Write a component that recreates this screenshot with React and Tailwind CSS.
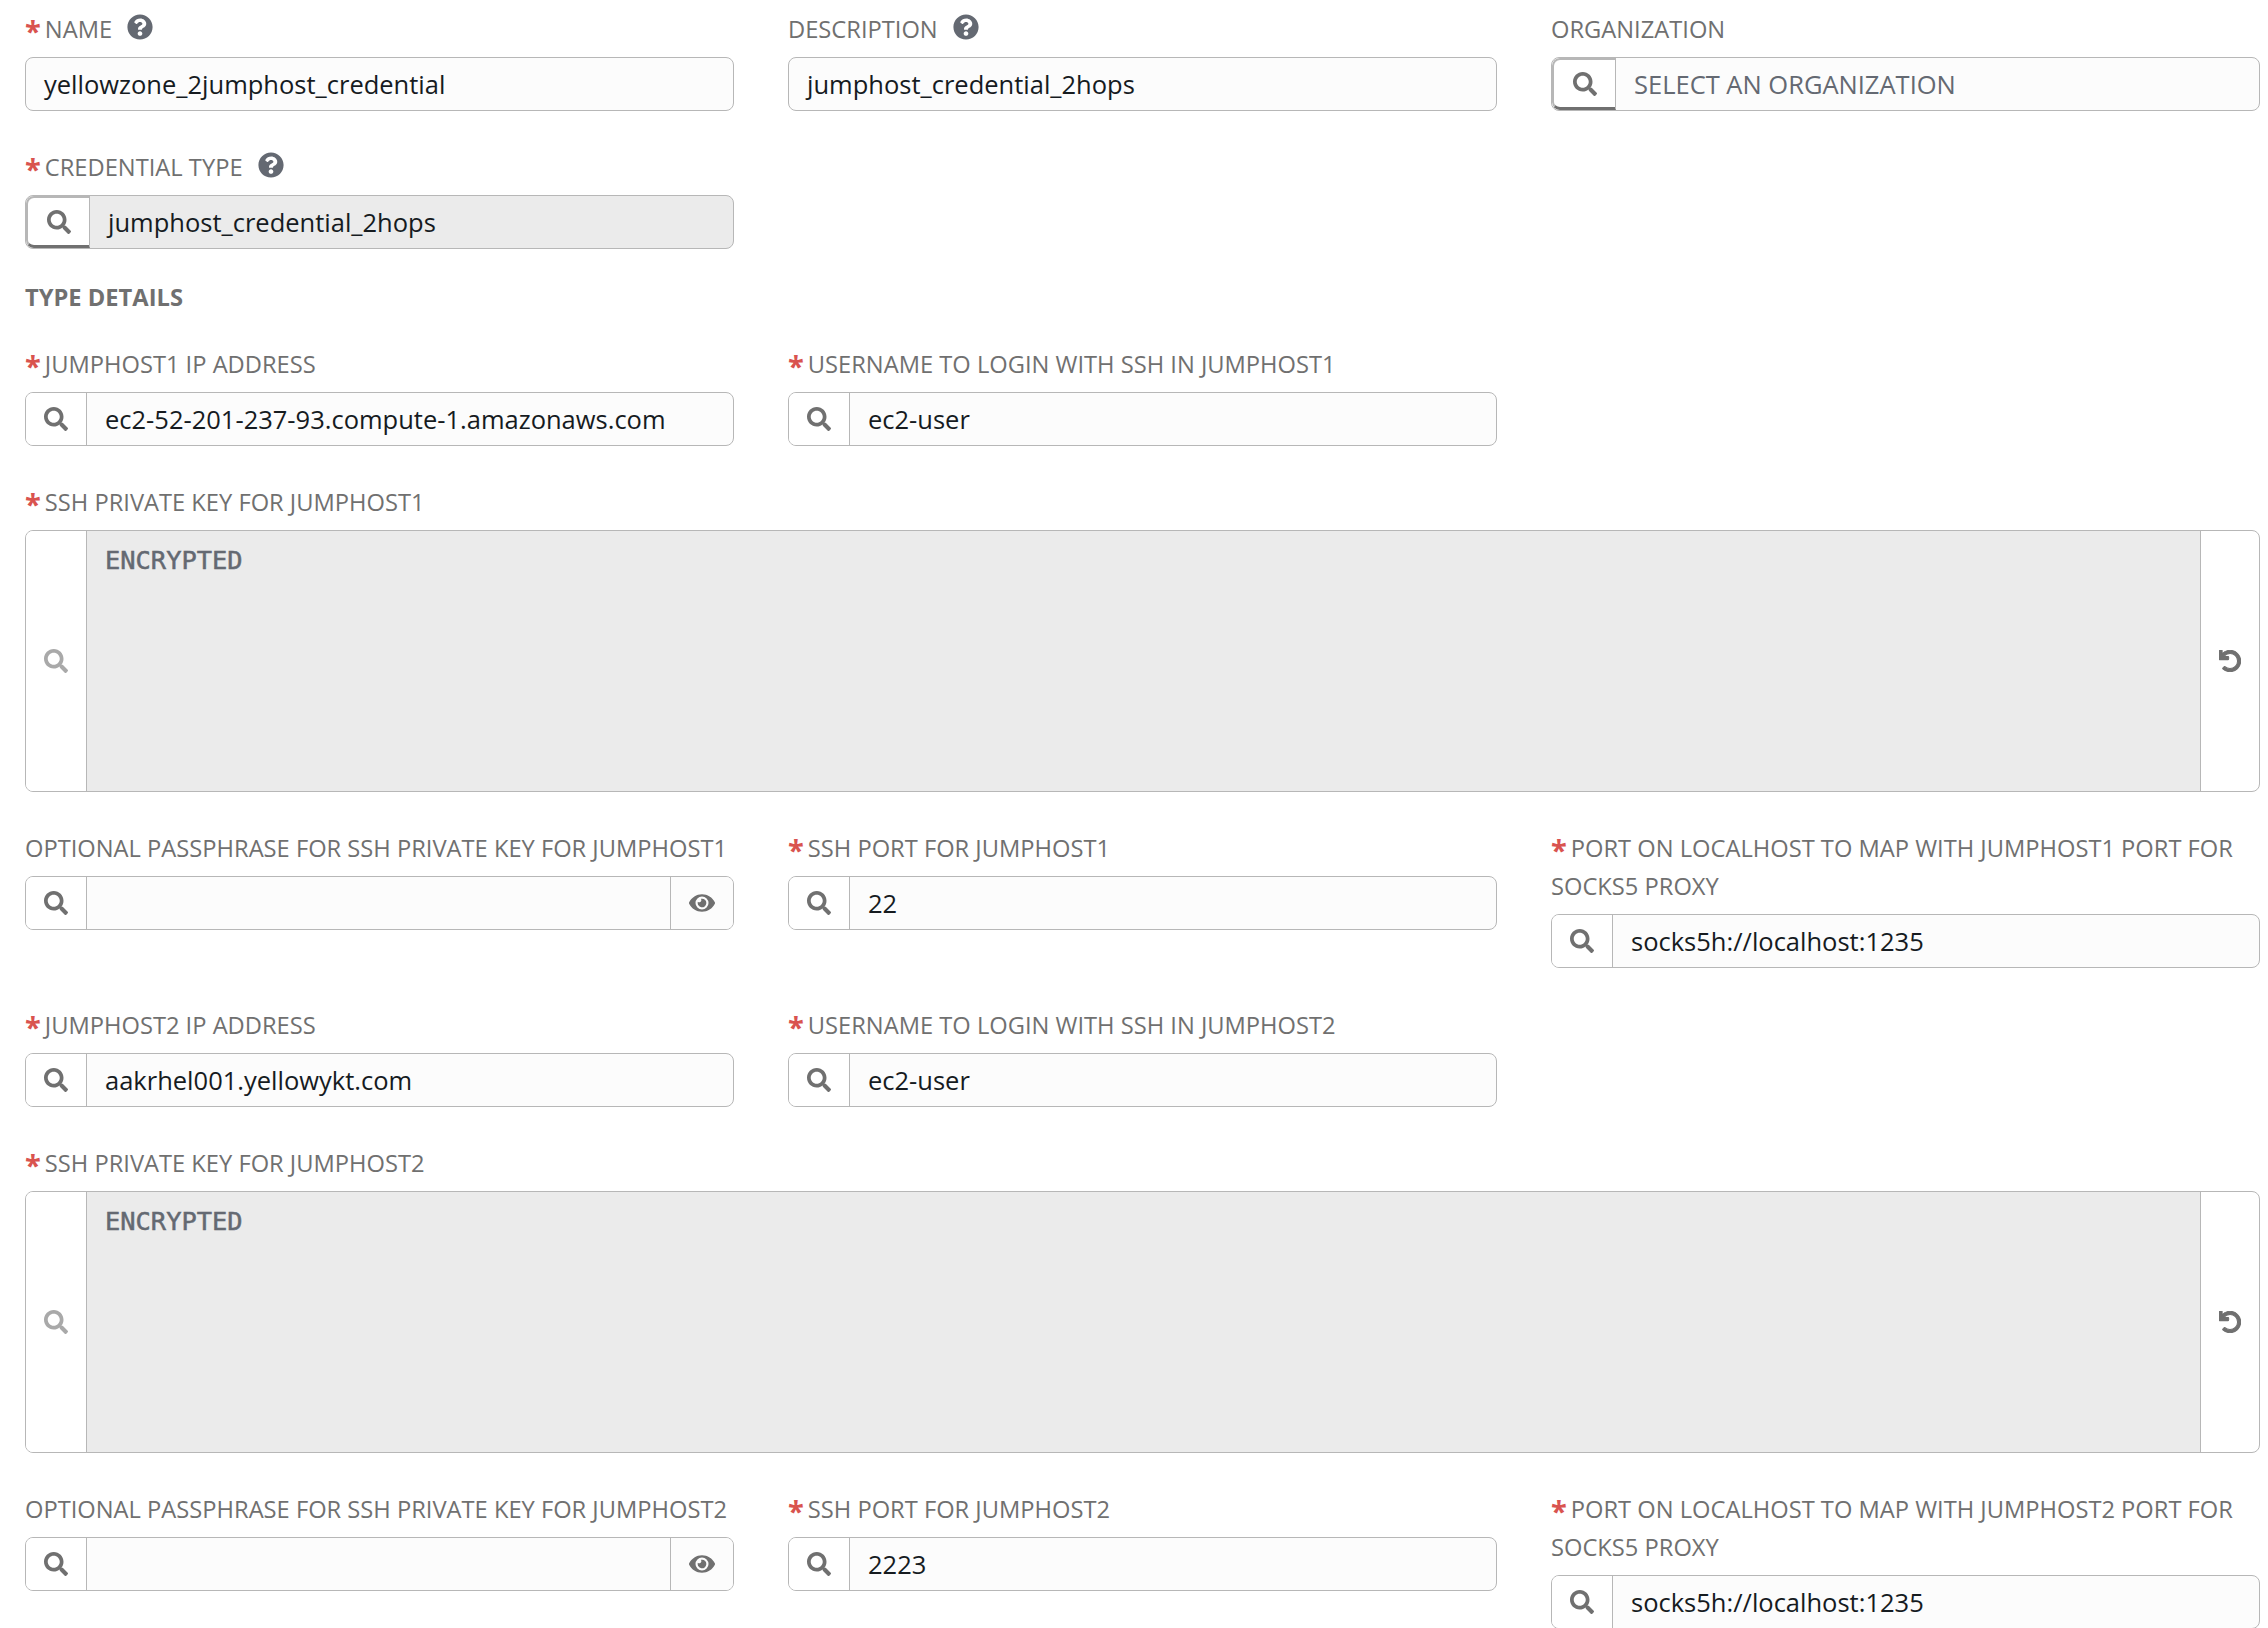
import { FaQuestionCircle, FaSearch, FaUndo, FaEye } from 'react-icons/fa';

function Label({ text, required, help, className = '' }) {
  return (
    <div className={`mb-[9px] text-[23.7px] leading-[38px] text-[#707070] ${className}`}>
      {required && <span className="mr-[4px] align-[-4px] text-[29px] font-bold leading-none text-[#d9534f]">*</span>}
      {text}
      {help && <FaQuestionCircle className="ml-[15px] inline-block align-[-2px] text-[#646972]" size={26} />}
    </div>
  );
}

function SearchAddon({ className = 'w-[61px]', muted }) {
  return (
    <div className={`flex shrink-0 items-center justify-center border-r border-[#b7b7b7] bg-white ${className}`}>
      <FaSearch size={24} className={muted ? 'text-[#a9a9a9]' : 'text-[#707070]'} />
    </div>
  );
}

function TextField({ value }) {
  return (
    <div className="flex h-[54px] items-center rounded-[8px] border border-[#b7b7b7] bg-[#fcfcfc] pl-[18px] text-[25.5px] text-[#161b1f]">
      {value}
    </div>
  );
}

function LookupField({ value }) {
  return (
    <div className="flex h-[54px] overflow-hidden rounded-[8px] border border-[#b7b7b7] bg-[#fcfcfc] text-[25.5px] text-[#161b1f]">
      <SearchAddon />
      <div className="flex flex-1 items-center pl-[18px]">{value}</div>
    </div>
  );
}

function SelectedLookup({ value, disabled }) {
  return (
    <div className={`flex h-[54px] overflow-hidden rounded-[8px] border border-[#b7b7b7] text-[25.5px] ${disabled ? 'bg-[#ebebeb] text-[#161b1f]' : 'bg-[#fcfcfc] text-[#646972]'}`}>
      <div className="flex w-[64px] shrink-0 items-center justify-center rounded-l-[8px] border-l-2 border-r border-t-2 border-b-[3px] border-[#b7b7b7] border-b-[#707070] bg-white">
        <FaSearch size={24} className="text-[#707070]" />
      </div>
      <div className="flex flex-1 items-center pl-[18px]">{value}</div>
    </div>
  );
}

function PasswordField() {
  return (
    <div className="flex h-[54px] overflow-hidden rounded-[8px] border border-[#b7b7b7] bg-[#fcfcfc]">
      <SearchAddon />
      <div className="flex-1" />
      <div className="flex w-[63px] items-center justify-center border-l border-[#b7b7b7] bg-[#fcfcfc]">
        <FaEye size={26} className="text-[#707070]" />
      </div>
    </div>
  );
}

function KeyField() {
  return (
    <div className="flex h-[262px] overflow-hidden rounded-[8px] border border-[#b7b7b7] bg-white">
      <SearchAddon muted />
      <div className="flex-1 bg-[#ebebeb] pl-[18px] pt-[13px] text-[25.4px] leading-[33px] text-[#646972] [font-family:'DejaVu_Sans_Mono',monospace] [-webkit-text-stroke:0.5px_#646972]">
        ENCRYPTED
      </div>
      <div className="flex w-[59px] shrink-0 items-center justify-center border-l border-[#b7b7b7]">
        <FaUndo size={22} strokeWidth={24} className="text-[#707070]" />
      </div>
    </div>
  );
}

function Grid({ children, className = '' }) {
  return <div className={`grid grid-cols-3 gap-x-[54px] ${className}`}>{children}</div>;
}

function HostSection({ n, user, port }) {
  return (
    <>
      <Grid className="mb-[37px]">
        <div>
          <Label required text={`JUMPHOST${n} IP ADDRESS`} />
          <LookupField value={user} />
        </div>
        <div>
          <Label required text={`USERNAME TO LOGIN WITH SSH IN JUMPHOST${n}`} />
          <LookupField value="ec2-user" />
        </div>
      </Grid>
      <div className="mb-[37px]">
        <Label required text={`SSH PRIVATE KEY FOR JUMPHOST${n}`} />
        <KeyField />
      </div>
      <Grid className="mb-[38px]">
        <div>
          <Label text={`OPTIONAL PASSPHRASE FOR SSH PRIVATE KEY FOR JUMPHOST${n}`} className="whitespace-nowrap" />
          <PasswordField />
        </div>
        <div>
          <Label required text={`SSH PORT FOR JUMPHOST${n}`} />
          <LookupField value={port} />
        </div>
        <div>
          <Label required text={`PORT ON LOCALHOST TO MAP WITH JUMPHOST${n} PORT FOR SOCKS5 PROXY`} />
          <LookupField value="socks5h://localhost:1235" />
        </div>
      </Grid>
    </>
  );
}

export default function App() {
  return (
    <div className="h-[1628px] overflow-hidden bg-white pl-[25px] pr-[8px] pt-[10px] [font-family:'Open_Sans',sans-serif]">
      <Grid className="mb-[37px]">
        <div>
          <Label required help text="NAME" />
          <TextField value="yellowzone_2jumphost_credential" />
        </div>
        <div>
          <Label help text="DESCRIPTION" />
          <TextField value="jumphost_credential_2hops" />
        </div>
        <div>
          <Label text="ORGANIZATION" />
          <SelectedLookup value="SELECT AN ORGANIZATION" />
        </div>
      </Grid>
      <Grid className="mb-[29px]">
        <div>
          <Label required help text="CREDENTIAL TYPE" />
          <SelectedLookup disabled value="jumphost_credential_2hops" />
        </div>
      </Grid>
      <div className="mb-[29px] text-[23.7px] font-bold leading-[38px] text-[#707070]">TYPE DETAILS</div>
      <HostSection n={1} user="ec2-52-201-237-93.compute-1.amazonaws.com" port="22" />
      <HostSection n={2} user="aakrhel001.yellowykt.com" port="2223" />
    </div>
  );
}
